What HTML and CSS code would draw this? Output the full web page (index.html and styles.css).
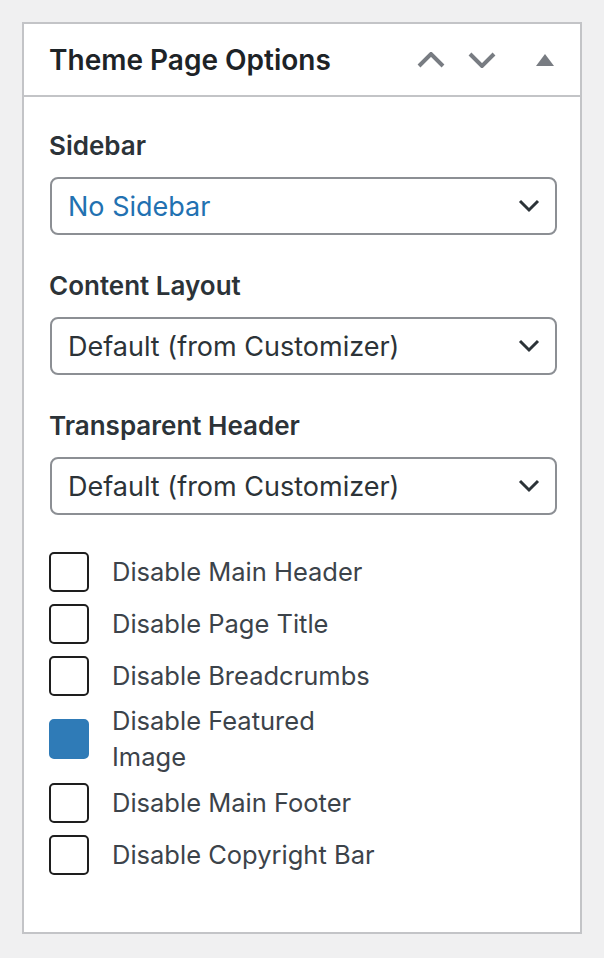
FILE: index.html
```html
<html>
<head>
    <title>Theme Page Options</title>
    <link rel="stylesheet" href="styles.css">
</head>
<body>

<div class="postbox">
    <div class="postbox-header">
        <h2>Theme Page Options</h2>
        <div class="handle-actions">
            <button class="handle-btn" title="Move up">
                <svg width="28" height="16" viewBox="0 0 28 16"><polyline points="2,14 14,2 26,14" fill="none" stroke="#787c82" stroke-width="4"/></svg>
            </button>
            <button class="handle-btn" title="Move down">
                <svg width="28" height="16" viewBox="0 0 28 16"><polyline points="2,2 14,14 26,2" fill="none" stroke="#787c82" stroke-width="4"/></svg>
            </button>
            <button class="handle-btn toggle" title="Toggle panel">
                <svg width="18" height="12" viewBox="0 0 18 12"><polygon points="9,0 18,12 0,12" fill="#787c82"/></svg>
            </button>
        </div>
    </div>

    <div class="inside">
        <div class="field">
            <label class="field-label">Sidebar</label>
            <div class="select active">
                <span>No Sidebar</span>
                <svg width="22" height="14" viewBox="0 0 22 14"><polyline points="2,2 11,11 20,2" fill="none" stroke="#2c3338" stroke-width="3"/></svg>
            </div>
        </div>

        <div class="field">
            <label class="field-label">Content Layout</label>
            <div class="select">
                <span>Default (from Customizer)</span>
                <svg width="22" height="14" viewBox="0 0 22 14"><polyline points="2,2 11,11 20,2" fill="none" stroke="#2c3338" stroke-width="3"/></svg>
            </div>
        </div>

        <div class="field">
            <label class="field-label">Transparent Header</label>
            <div class="select">
                <span>Default (from Customizer)</span>
                <svg width="22" height="14" viewBox="0 0 22 14"><polyline points="2,2 11,11 20,2" fill="none" stroke="#2c3338" stroke-width="3"/></svg>
            </div>
        </div>

        <ul class="checks">
            <li><input type="checkbox" id="c1"><label for="c1">Disable Main Header</label></li>
            <li><input type="checkbox" id="c2"><label for="c2">Disable Page Title</label></li>
            <li><input type="checkbox" id="c3"><label for="c3">Disable Breadcrumbs</label></li>
            <li class="two-line"><input type="checkbox" id="c4" checked><label for="c4">Disable Featured Image</label></li>
            <li><input type="checkbox" id="c5"><label for="c5">Disable Main Footer</label></li>
            <li><input type="checkbox" id="c6"><label for="c6">Disable Copyright Bar</label></li>
        </ul>
    </div>
</div>

</body>
</html>
```

FILE: styles.css
```css
body {
    background-color: #f0f0f1;
    margin: 0;
    padding: 22px;
    font-family: Inter, 'Noto Sans', sans-serif;
}

.postbox {
    background-color: #fff;
    border: 2px solid #c3c4c7;
    width: 556px;
    height: 908px;
}

.postbox-header {
    display: flex;
    align-items: center;
    height: 71px;
    border-bottom: 2px solid #c3c4c7;
    padding: 0 10px 0 25px;
}

.postbox-header h2 {
    flex: 1;
    margin: 0;
    font-size: 28px;
    font-weight: 600;
    color: #1d2327;
}

.handle-actions {
    display: flex;
    align-items: center;
}

.handle-btn {
    width: 51px;
    height: 50px;
    border: none;
    background: none;
    padding: 0;
    display: flex;
    align-items: center;
    justify-content: center;
    cursor: pointer;
}

.handle-btn.toggle {
    margin-left: 13px;
    width: 50px;
}

.inside {
    padding: 31px 23px 0 25px;
}

.field {
    margin-bottom: 33px;
}

.field-label {
    display: block;
    font-size: 26px;
    font-weight: 600;
    line-height: 36px;
    color: #2c3338;
    margin-bottom: 13px;
}

.select {
    display: flex;
    align-items: center;
    justify-content: space-between;
    height: 54px;
    margin-left: 1px;
    border: 2px solid #8c8f94;
    border-radius: 8px;
    padding: 0 15px 0 16px;
    font-size: 27px;
    color: #2c3338;
}

.select.active {
    color: #2271b1;
}

.checks {
    list-style-type: none;
    margin: 37px 0 0;
    padding: 0;
}

.checks li {
    display: flex;
    align-items: center;
    min-height: 40px;
    margin-bottom: 12px;
}

.checks li.two-line {
    margin-top: -5px;
    margin-bottom: 8px;
}

.checks input {
    appearance: none;
    -webkit-appearance: none;
    flex: none;
    width: 40px;
    height: 40px;
    margin: 0 23px 0 0;
    border: 2px solid #1e1e1e;
    border-radius: 5px;
    background-color: #fff;
}

.checks input:checked {
    background-color: #2f7bb7;
    border-color: #2f7bb7;
}

.checks label {
    max-width: 275px;
    font-size: 25.5px;
    line-height: 36px;
    color: #3c434a;
}
```
